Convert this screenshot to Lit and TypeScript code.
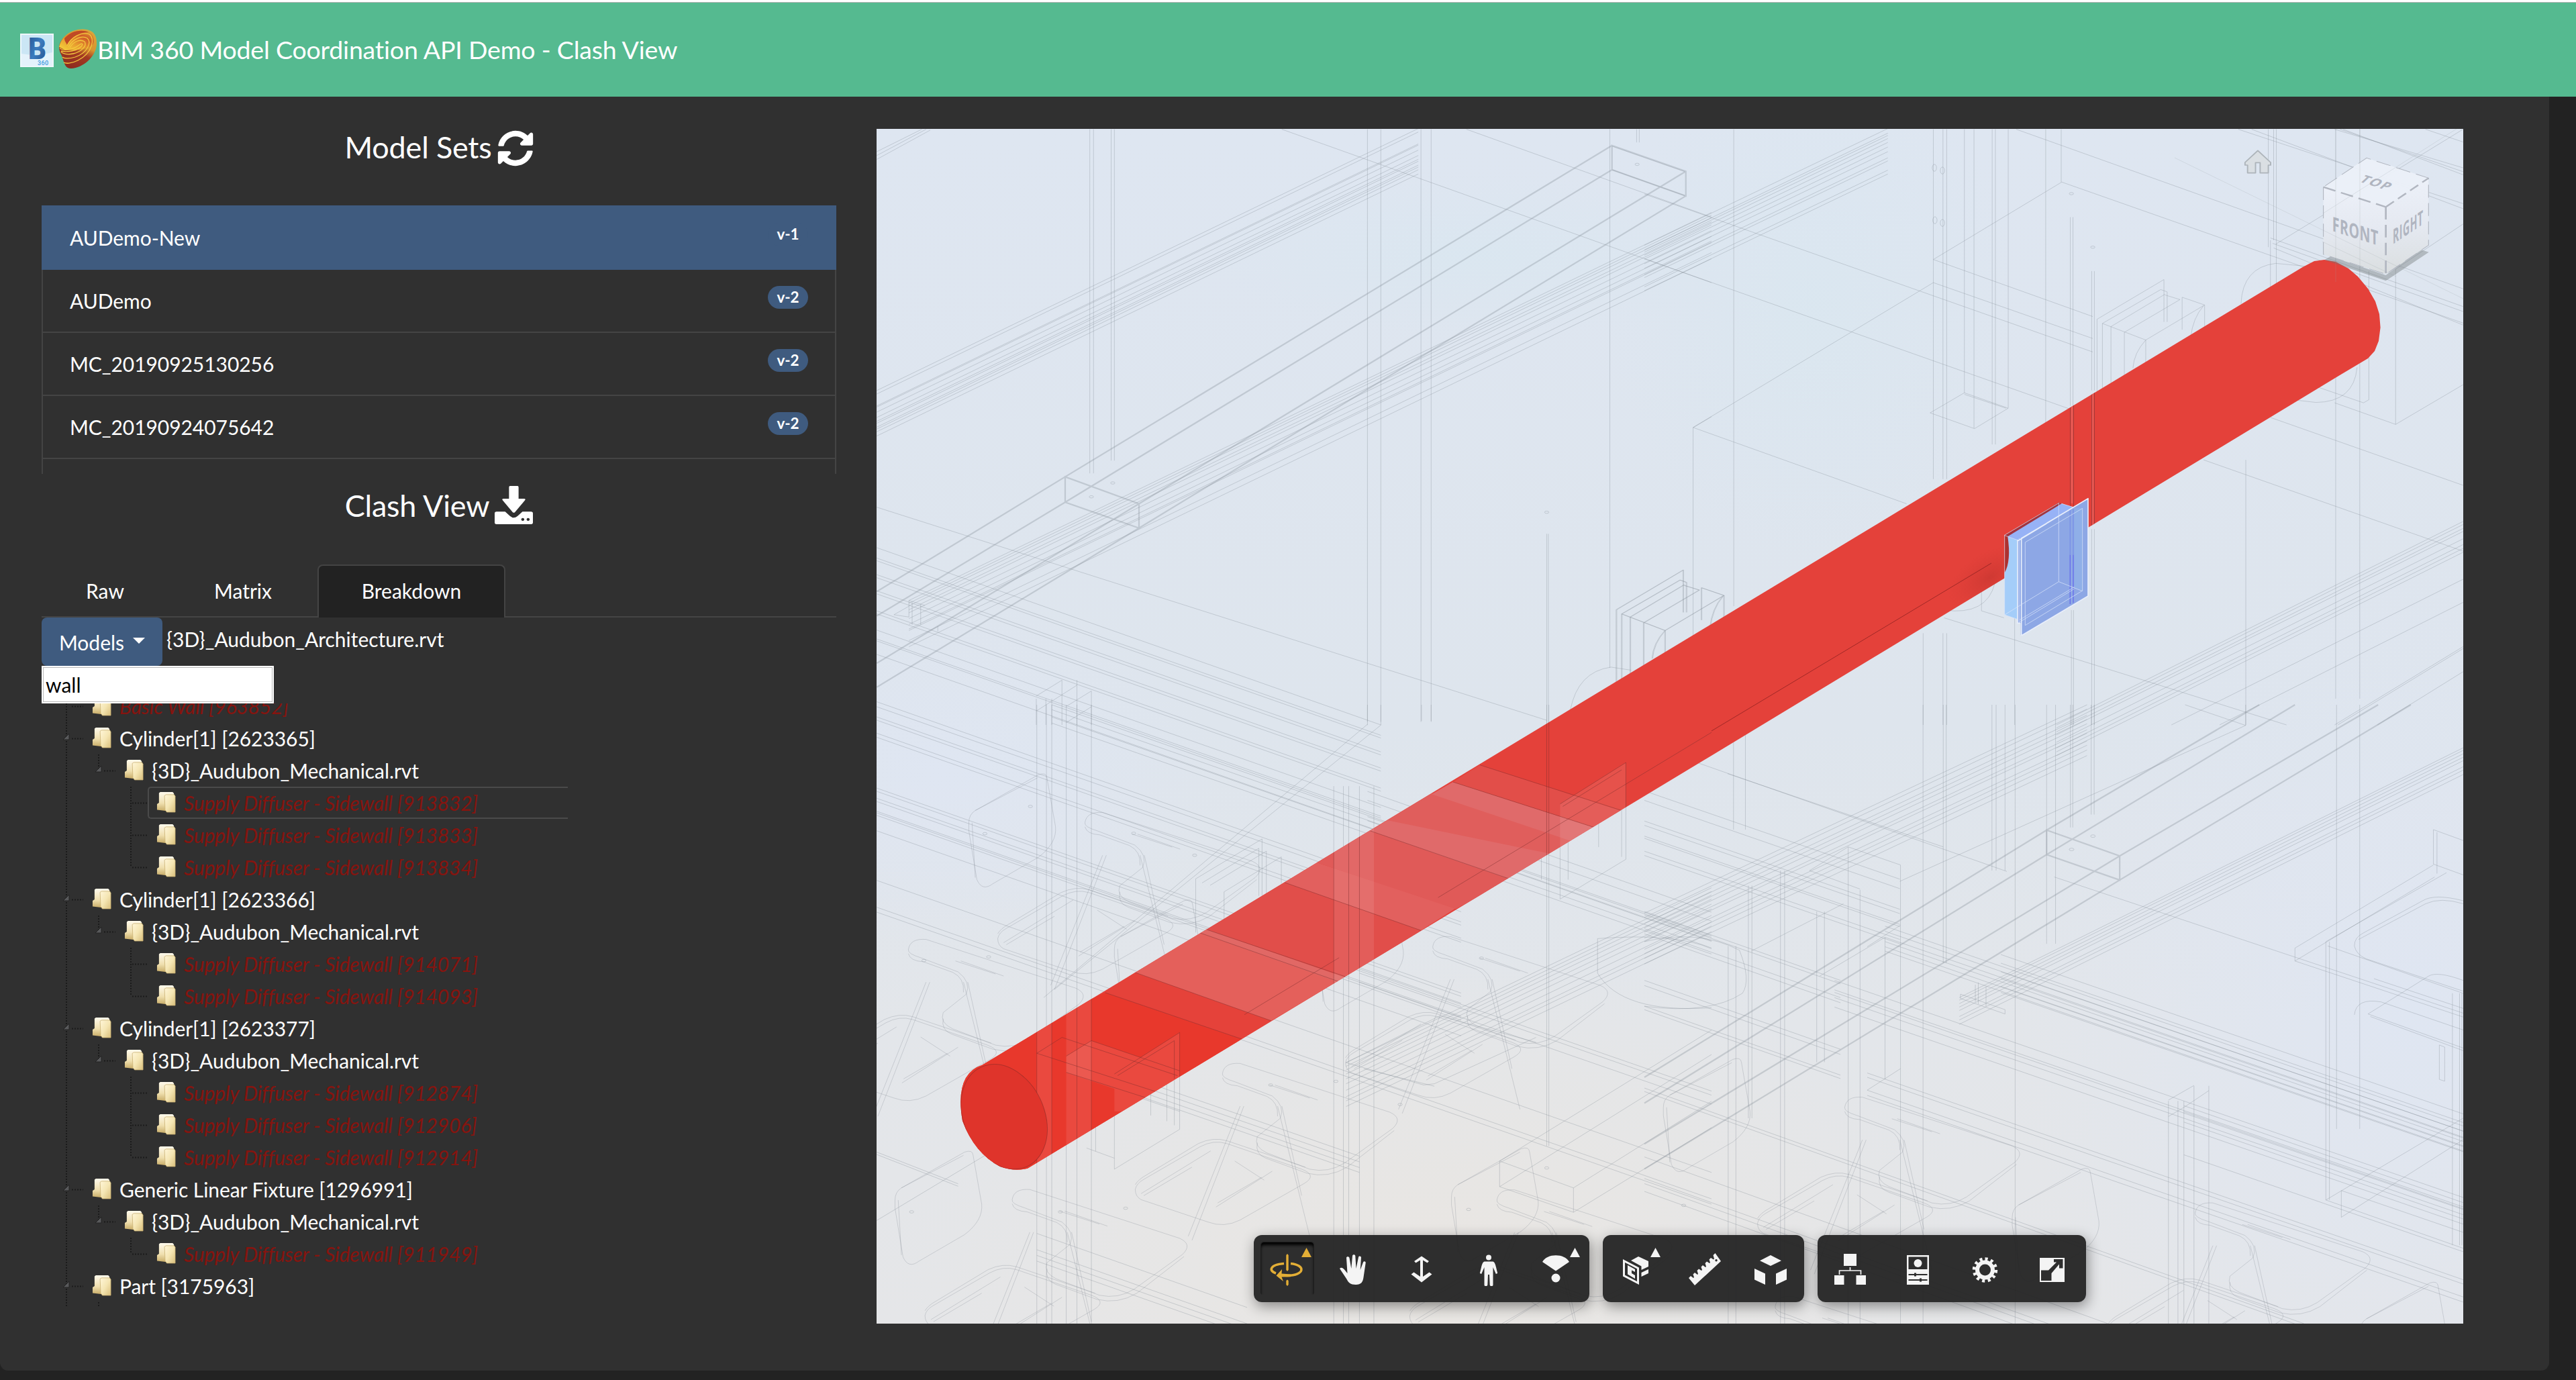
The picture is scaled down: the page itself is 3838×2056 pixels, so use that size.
import { LitElement, html, css, svg } from "lit";
import { customElement, property } from "lit/decorators.js";
import { classMap } from "lit/directives/class-map.js";

type Seg = [number, number, number, number];

/** Path data for single segments. */
const segs = (list: Seg[]) => list.map(([a, b, c, d]) => `M${a},${b}L${c},${d}`).join("");

/** Path data for one segment repeated at vertical offsets. */
const bundle = ([a, b, c, d]: Seg, dys: number[]) =>
  dys.map((o) => `M${a},${b + o}L${c},${d + o}`).join("");

/** Path data for vertical lines. */
const verts = (xs: number[], y1: number, y2: number) =>
  xs.map((x) => `M${x},${y1}V${y2}`).join("");

/** Wall diffuser outline with its top-right corner at x, y. */
const diffuser = (x: number, y: number) =>
  `M${x},${y}L${x - 125},${y + 103}V${y + 330}M${x},${y}V${y + 110}` +
  `M${x - 6},${y + 26}L${x - 115},${y + 114}V${y + 330}M${x - 6},${y + 26}L${x + 6},${y + 32}V${y + 110}` +
  `M${x + 2},${y + 38}L${x - 99},${y + 122}V${y + 330}M${x + 2},${y + 40}L${x + 30},${y + 52}L${x - 74},${y + 137}V${y + 280}` +
  `M${x + 34},${y + 46}L${x + 76},${y + 66}L${x - 34},${y + 157}L${x - 115},${y + 114}M${x + 34},${y + 46}V${y + 130}` +
  `M${x + 76},${y + 66}V${y + 130}M${x - 34},${y + 157}V${y + 220}M${x - 34},${y + 157}Q${x - 56},${y + 190} ${x - 58},${y + 230}` +
  `M${x + 74},${y + 68}Q${x + 54},${y + 100} ${x + 50},${y + 150}`;

const CHAIR =
  "M234,575Q236,560 250,550L355,470Q380,452 405,462L545,525Q575,540 550,560L430,650Q400,670 370,655L245,600Q234,592 234,575Z" +
  "M234,563Q240,550 254,540L352,462Q380,445 405,455L552,520" +
  "M397,290Q400,262 430,265L710,385Q735,400 715,425L625,510Q595,535 560,525L480,485Q455,470 462,445L505,400Q515,370 490,345L420,310Q395,300 397,290Z" +
  "M397,300Q400,318 425,320L480,346Q502,360 500,395M718,430L630,520Q595,548 555,535L478,498Q458,488 462,460" +
  "M437,370L340,700M430,370L333,690M500,370L560,690M508,370L545,590M245,585L375,480M250,590L340,520M385,618L490,530M388,608L470,545M420,505L475,552M485,318L560,350M495,318L575,355";

const CHAIR_BACK =
  "M180,290Q180,270 192,260L310,172Q325,165 326,180L342,300Q345,340 310,375L225,440Q205,460 195,430L180,310ZM192,260L308,180M186,290L192,425";

const Q7 = [
  bundle([8, 700, 1020, 20], [0, 9, 40, 43, 56, 70, 80, 85, 95, 100, 107, 118]),
  bundle([68, 1245, 1568, 238], [0, 7, 14, 24, 32, 47, 62, 74, 78, 104, 120]),
  segs([[8, 80, 92, 22], [8, 90, 100, 22], [8, 100, 108, 24],
    [765, 22, 1568, 420], [1110, 22, 1568, 250], [8, 1003, 1260, 1556],
    [1382, 66, 1518, 132], [1382, 127, 1518, 194], [1534, 796, 1568, 768]]),
  verts([925, 950], 22, 1560), verts([1025, 1044], 22, 1560),
  verts([406, 413], 22, 915), verts([446, 452], 22, 882), verts([1378], 22, 1420), verts([1260, 1263], 1072, 1568),
  verts([1428, 1433], 22, 56),
  verts([354, 382], 1452, 1568), verts([409], 1480, 1568), verts([306, 324, 335], 1500, 1568),
  bundle([8, 1108, 950, 1568], [0, 27, 34, 70, 78, 112, 120, 164, 172, 214, 237, 242, 277, 400]),
  "M306,1493L354,1452M306,1532L382,1465M362,1520L409,1480M362,1562L409,1521",
  "M68,1245V1288L40,1282L68,1260M68,1245L98,1258M90,1255V1308M74,1250V1308M122,1325V1312",
  diffuser(1516, 1166),
  "M1304,1530Q1318,1430 1380,1418L1418,1426M445,940a4,3 0 1 0 8,0a4,3 0 1 0 -8,0M405,976a4,3 0 1 0 8,0a4,3 0 1 0 -8,0M1256,1016a4,3 0 1 0 8,0a4,3 0 1 0 -8,0M1425,113a4,3 0 1 0 8,0a4,3 0 1 0 -8,0",
].join("");

const Q7_STRONG =
  segs([[360, 924, 1382, 64], [360, 990, 1382, 127], [498, 994, 1520, 131], [498, 1057, 1520, 195],
    [360, 924, 8, 1222], [360, 990, 8, 1285], [498, 994, 8, 1408], [498, 1057, 8, 1470]]) +
  "M360,924V990L498,1057V994ZM1382,64V127L1520,195V131Z";

const Q8 = [
  bundle([0, 323, 455, 20], [0, 12, 18, 26, 36, 48, 60, 76, 84, 108, 118]),
  verts([167], 22, 1260), verts([540, 558, 565], 22, 930), verts([616], 22, 798), verts([598], 22, 706),
  verts([650, 656], 22, 840), verts([680], 22, 745), verts([750], 22, 790), verts([779], 22, 159),
  verts([1176, 1181], 22, 310), verts([1166], 22, 328), verts([1170, 1181], 310, 440),
  verts([1292, 1337], 22, 1500), verts([1404], 385, 788), verts([1124], 880, 1568),
  verts([796, 801], 250, 740), verts([836, 841], 390, 700), verts([836, 841], 1060, 1568), verts([798, 802], 1270, 1568),
  verts([521, 558, 565], 1330, 1568), verts([692], 1290, 1568), verts([91], 796, 1340),
  segs([[695, 22, 1530, 436], [780, 159, 1530, 525], [780, 159, 540, 360], [540, 360, 838, 508], [0, 190, 838, 600],
    [540, 420, 91, 796], [540, 420, 838, 565], [0, 358, 795, 748], [91, 796, 490, 994], [1045, 880, 1530, 1117],
    [1170, 770, 1530, 946], [1530, 685, 1404, 788], [1404, 788, 1290, 732], [1170, 304, 1530, 482], [1174, 318, 1530, 495],
    [1176, 330, 1530, 530], [1110, 22, 1530, 215], [1135, 22, 1530, 228], [1290, 22, 1530, 122], [1300, 22, 1530, 132],
    [1306, 22, 1530, 140], [1460, 22, 1530, 55], [1530, 22, 1180, 320], [1530, 268, 1404, 385], [560, 1290, 1200, 1568]]),
  bundle([770, 1568, 1530, 1040], [0, 8, 18, 26, 45, 60, 70, 80]),
  segs([[985, 1568, 1530, 1190], [1075, 1568, 1530, 1250], [1290, 1568, 1530, 1365], [1370, 1568, 1530, 1430], [1296, 1568, 1530, 1370]]),
  "M598,706L680,746L617,799L534,758ZM598,710L676,746",
  "M538,122a4,9 0 1 0 8,0a4,9 0 1 0 -8,0M553,129a4,9 0 1 0 8,0a4,9 0 1 0 -8,0M539,258a4,9 0 1 0 8,0a4,9 0 1 0 -8,0M553,265a4,9 0 1 0 8,0a4,9 0 1 0 -8,0",
  "M794,189a4,3 0 1 0 8,0a4,3 0 1 0 -8,0M834,328a4,3 0 1 0 8,0a4,3 0 1 0 -8,0",
  diffuser(971, 412), diffuser(72, 1166),
  "M1115,475Q1118,380 1180,370L1240,378M1332,640Q1326,730 1255,731L1200,722M1354,390V724L1344,732L1210,668M560,1270Q640,1285 655,1200M630,1215V1272L672,1290",
].join("");

const Q9 = [
  verts([307, 325, 335, 362, 382, 409], 0, 1522), verts([862, 880, 890, 910, 937], 200, 1522), verts([1260, 1264], 0, 1085),
  verts([925, 950], 0, 50), verts([1026, 1044], 0, 40),
  bundle([8, 30, 1100, 534], [-25, 0, 8, 40, 50, 175, 183, 200, 208, 232, 236, 242, 280]),
  segs([[8, 432, 1568, 1150], [8, 498, 1568, 1215], [8, 510, 1568, 1228], [8, 1100, 160, 1178], [8, 1106, 160, 1184],
    [8, 1268, 600, 800], [340, 700, 950, 50], [320, 720, 925, 48]]),
  bundle([335, 0, 1568, 568], [0, 12, 30, 45]),
  bundle([925, 225, 1568, 522], [-12, 10, 50, 60]),
  bundle([910, 650, 1568, 950], [0, 10, 32]),
  bundle([362, 860, 910, 1110], [0, 14, 28, 40]),
  bundle([307, 1340, 700, 1522], [0, -40, 14, 28]),
  bundle([885, 880, 1568, 450], [0, 9, 18, 28, 40, 52, 68, 84, 94, 108]),
  "M885,880L1030,935L1050,932L1240,818M918,895L1050,938M885,880L1060,765L1240,830",
  "M1172,1122L1310,1188V1248L1172,1185ZM1172,1122L1568,800M1172,1185L1568,860M1310,1188L1568,975M1310,1248L1568,1040",
  "M604,428L728,330V470M604,428V560M616,438L722,353V470M631,444L736,360V470M657,460L764,374V440M657,460V530",
  "M1285,244L1408,142V380L1285,478ZM1290,250L1400,160V374M1250,430V270M1300,430V330M1357,350V290",
  "M452,908L574,806V1044L452,1142ZM458,912L564,826V1034M417,1098V1000M550,1024V930M520,1010V950",
  "M400,1090L452,1115M307,857L354,818L570,912M307,857L362,884M362,864L409,826L574,900M362,904L574,1000",
  "M1355,575Q1500,560 1568,600M1355,575V660Q1400,760 1568,745",
].join("");

const Q10 = [
  bundle([0, 484, 745, 0], [0, 10, 24, 34, 44, 58, 66, 84, 94, 105, 118]),
  bundle([530, 680, 1378, 100], [0, 6, 14, 22, 30, 44, 52, 62]),
  bundle([0, 200, 430, 405], [0, 22, 70, 80, 105, 110, 140, 150]),
  bundle([0, 480, 330, 640], [0, 8, 40, 52, 160, 172, 220, 228]),
  bundle([405, 540, 1378, 1004], [-26, -14, 0, 10, 22, 32]),
  bundle([320, 680, 1378, 1184], [-40, -18, -12, 0, 22]),
  bundle([600, 620, 1378, 990], [-40, -20, 0, 16, 34, 48]),
  bundle([375, 895, 1378, 1375], [0, 12, -30, -40]),
  bundle([0, 890, 1110, 1437], [0, 8]),
  bundle([0, 1050, 780, 1437], [0, 50, 62, 80]),
  bundle([908, 945, 1378, 1170], [0, 24, -14, 100]),
  verts([150, 170], 0, 290), verts([229, 236], 385, 1437), verts([343, 363], 430, 1437), verts([343], 330, 430), verts([431], 372, 1437),
  verts([405], 540, 870), verts([181, 175], 420, 960), verts([141, 154], 560, 1437), verts([290, 303], 480, 830), verts([469], 0, 1437),
  verts([503, 508], 0, 600), verts([585, 592], 0, 385), verts([607], 0, 385), verts([624], 0, 1437),
  verts([677, 692], 0, 555), verts([717, 721], 0, 285), verts([752, 757], 0, 255),
  verts([882, 898, 908], 920, 1437), verts([925, 950], 885, 1437), verts([1147, 1153], 550, 1150), verts([1165, 1204], 0, 985),
  verts([1360, 1372, 1376], 670, 1255),
  segs([[80, 130, 610, 387], [140, 160, 503, 330], [690, 400, 1378, 716], [910, 0, 1012, 48], [1012, 48, 430, 410], [1012, 0, 1012, 48],
    [1095, 565, 1328, 372], [1095, 565, 1095, 595], [1095, 595, 1378, 725], [1095, 595, 1330, 400], [343, 330, 431, 372],
    [278, 385, 343, 330], [278, 385, 363, 428], [180, 572, 335, 462], [295, 630, 405, 540], [375, 562, 431, 512],
    [375, 895, 431, 845], [882, 918, 925, 884], [908, 935, 950, 896], [882, 956, 908, 935], [1147, 1150, 1378, 1262],
    [1147, 1150, 1378, 960], [1173, 1128, 1378, 1225], [1173, 1190, 1378, 1010], [1173, 1128, 1173, 1190], [1147, 550, 1350, 390]]),
  "M1328,290L1378,315M1328,290V370L1378,395M1334,296V392M1195,560Q1195,540 1210,530L1310,455Q1330,438 1378,455M1195,560Q1198,580 1215,590L1378,665M1202,545L1315,462Q1340,446 1378,462",
  "M1218,718L1320,630Q1335,618 1378,640M1218,718L1378,797M1222,724L1378,803M1228,636L1378,705M1150,560L1378,670M1195,720Q1198,680 1240,690L1378,755M1338,790V870L1347,874V795Z",
  "M0,550Q90,520 160,570Q180,640 165,670Q110,720 0,700",
  "M751,305a4,3 0 1 0 8,0a4,3 0 1 0 -8,0M715,336a4,3 0 1 0 8,0a4,3 0 1 0 -8,0M557,650V690M562,645V695M575,655V700M532,672V682L607,718V708Z",
].join("");

const Q10_STRONG =
  segs([[677, 291, 1035, 0], [677, 348, 1095, 0], [800, 351, 1235, 0], [800, 407, 1290, 0],
    [677, 291, 0, 865], [677, 348, 0, 925], [800, 351, 0, 1020], [800, 407, 0, 1078]]) +
  "M677,291L800,351V407L677,348Z";

const CHAIRS: [number, number][] = [[0, 0], [-330, 312], [257, 617], [-136, 927], [650, 305], [770, 928], [1420, 700], [2075, 960], [1290, 1190]];
const BACKS: [number, number][] = [[0, 0], [-138, 928], [272, 310], [902, 920], [1298, 700], [650, 305], [1950, 970], [2600, 1250]];
const DOTS: [number, number][] = [[295, 250], [210, 317], [488, 316], [96, 629], [744, 935], [351, 1247], [1138, 623], [217, 620], [866, 926], [473, 1238], [1260, 1139], [986, 983], [73, 1247], [1516, 1231], [602, 370], [1114, 1241]];

@customElement("model-scene")
class ModelScene extends LitElement {
  static styles = css`
    :host { display: block; width: 2364px; height: 1780px; }
    svg { display: block; width: 2364px; height: 1780px; }
    .wire path, .wire ellipse { fill: none; stroke: #848c94; stroke-opacity: 0.33; stroke-width: 1; vector-effect: non-scaling-stroke; }
    .wire .strong { stroke-width: 2.2; stroke-opacity: 0.32; }
    .wire .faint { stroke-opacity: 0.3; }
    .cube text { font-family: "Open Sans", sans-serif; font-weight: 700; fill: #b0b5c0; text-anchor: middle; }
  `;
  render() {
    const chairs = CHAIRS.map(([x, y]) => svg`<path class="faint" transform="translate(${x} ${y})" d=${CHAIR} />`);
    const backs = BACKS.map(([x, y]) => svg`<path class="faint" transform="translate(${x} ${y})" d=${CHAIR_BACK} />`);
    const dots = DOTS.map(([x, y]) => svg`<ellipse cx=${x} cy=${y} rx="4" ry="3" />`);
    return html`
      <svg viewBox="1306 192 2364 1780">
        <defs>
          <linearGradient id="sky" x1="0" y1="0" x2="0" y2="1">
            <stop offset="0" stop-color="#dee6f1" />
            <stop offset="0.5" stop-color="#dee5ed" />
            <stop offset="0.75" stop-color="#e3e6ea" />
            <stop offset="1" stop-color="#e5e6e8" />
          </linearGradient>
          <radialGradient id="warm"><stop offset="0" stop-color="#e9e6e2" /><stop offset="1" stop-color="#e9e6e2" stop-opacity="0" /></radialGradient>
          <radialGradient id="cool"><stop offset="0" stop-color="#dfe6f2" /><stop offset="1" stop-color="#dfe6f2" stop-opacity="0" /></radialGradient>
          <radialGradient id="aqua"><stop offset="0" stop-color="#d8e7f0" stop-opacity="0.6" /><stop offset="1" stop-color="#d8e7f0" stop-opacity="0" /></radialGradient>
          <radialGradient id="shade"><stop offset="0" stop-color="#b02d28" stop-opacity="0.4" /><stop offset="1" stop-color="#c8352f" stop-opacity="0" /></radialGradient>
          <linearGradient id="front" x1="0" y1="0" x2="0" y2="1"><stop offset="0" stop-color="#edf1f9" /><stop offset="0.5" stop-color="#e5e9f1" /><stop offset="1" stop-color="#dadedf" /></linearGradient>
          <clipPath id="pipe">
            <path d="M1463.4,1586.8L2350.7,1050L3430.7,398L3448,389L3463,387L3480,390L3499,400L3513,412L3528,430L3539,449L3545,468L3546.6,488L3544,508L3538,523L3528,534L3486,559L2550,1125.7L1531,1740.7Q1512,1746 1490,1738Q1452,1718 1434,1670Q1422,1600 1463.4,1586.8Z" />
          </clipPath>
        </defs>
        <rect x="1306" y="192" width="2364" height="1780" fill="url(#sky)" />
        <ellipse cx="2150" cy="1900" rx="800" ry="480" fill="url(#warm)" />
        <ellipse cx="3600" cy="1500" rx="600" ry="700" fill="url(#cool)" />
        <ellipse cx="1400" cy="1150" rx="420" ry="260" fill="url(#cool)" />
        <ellipse cx="2200" cy="380" rx="400" ry="120" fill="url(#aqua)" />
        <ellipse cx="2700" cy="450" rx="300" ry="380" fill="url(#aqua)" />
        <g class="wire" transform="translate(1300 180) scale(.79719 .57398)">
          <path d=${Q7} /><path class="strong" d=${Q7_STRONG} />
        </g>
        <g class="wire" transform="translate(2450 180) scale(.79719 .57398)"><path d=${Q8} /></g>
        <g class="wire" transform="translate(1300 1050) scale(.79719 .60587)">
          <path d=${Q9} />${chairs}${backs}${dots}
        </g>
        <g class="wire" transform="translate(2450 1050) scale(.88520 .64160)">
          <path d=${Q10} /><path class="strong" d=${Q10_STRONG} />
        </g>

        <g clip-path="url(#pipe)">
          <rect x="1400" y="380" width="2200" height="1400" fill="#e4413a" />
          <g transform="translate(1300 1050) scale(.79719 .60587)">
            <path fill="#e8382c" d="M100,900L435,708L690,822L300,1200H100Z" />
            <path fill="#e5423a" d="M435,708L490,658L745,777L690,822Z" />
            <path fill="#e4605b" d="M490,658L610,558L870,680L745,777Z" />
            <path fill="#e16865" d="M610,560L625,550L887,670L870,682Z" />
            <path fill="#e14e4a" d="M625,553L770,437L1025,555L887,672Z" />
            <path fill="#e2605e" d="M770,437L830,388L1090,500L1025,555Z" />
            <path fill="#e05a58" d="M830,388L930,308L1192,430L1090,502Z" />
            <path fill="#e06a6a" d="M930,310L965,282L1266,364L1192,430Z" />
            <path fill="#e05e5c" d="M962,284L1045,218L1310,335L1266,366Z" />
            <path fill="#e06a6a" d="M1045,220L1085,190L1350,302L1310,337Z" />
            <path fill="#e24e49" d="M1085,190L1135,148L1402,262L1350,302Z" />
            <path fill="#fff" fill-opacity="0.09" d="M307,700H335V1200H307ZM362,600H409V1200H362ZM862,300H937V700H862Z" />
            <path fill="#fff" fill-opacity="0.09" d="M362,864L409,826L574,900L505,968L362,904ZM1285,244L1408,142V300L1285,400ZM452,908L574,806V1000H452Z" />
            <path fill="none" stroke="#7a2e2e" stroke-opacity="0.45" vector-effect="non-scaling-stroke" d="M307,700V1200M335,600V1200M382,600V1200M409,600V1200M862,300V700M890,300V700M910,300V700M1260,0V400M1264,0V400M435,708L690,822M490,658L745,777M610,560L870,680M625,553L887,670M770,437L1025,555M930,310L1190,428M1085,190L1350,302M1135,148L1400,260M695,762L872,622M1057,474L1568,68M452,908L574,806V920M458,912L564,826V920M1285,244L1408,142V300M1290,250L1400,160M307,857L354,818L570,912M362,864L409,826L574,900M362,904L520,970M307,857L550,960" />
            <ellipse cx="246" cy="1013" rx="77" ry="131" transform="rotate(-13 246 1013)" fill="#df342b" stroke="#8c2b28" stroke-opacity="0.6" stroke-width="1" vector-effect="non-scaling-stroke" />
          </g>
          <ellipse cx="2965" cy="860" rx="70" ry="38" transform="rotate(-31 2965 860)" fill="url(#shade)" />
          <path fill="none" stroke="#86201f" stroke-opacity="0.7" d="M2967,839L2550,1089" />
          <path fill="none" stroke="#e8716c" stroke-opacity="0.55" stroke-width="3" d="M3087,560V750M3118,540V790" />
          <path fill="none" stroke="#7c2f33" stroke-opacity="0.6" d="M3084.500,580V760M3089.500,580V760M3116.500,560V800M3120.500,560V800" />
        </g>

        <g transform="translate(2900 680) scale(.33333)" stroke-linejoin="round">
          <path fill="#8c3040" fill-opacity="0.75" d="M258,353L505,205L515,215L275,360Z" />
          <path fill="#9f2e30" fill-opacity="0.8" d="M260,355H275L281,430L272,490L260,520Z" />
          <path fill="#a4cdf9" d="M274,358L318,372V728L260,708V520Q290,470 274,358Z" />
          <path fill="#97b2f6" d="M274,358L515,211L570,228L335,370L318,374Z" />
          <path fill="#8da7e5" d="M318,374L335,366L633,188V624L340,798H332V745H318Z" />
          <path fill="#8fafe8" d="M571,232L608,230V600L571,585Z" />
          <path fill="none" stroke="#6f86e8" stroke-width="4" stroke-opacity="0.7" d="M553,240V440M567,235V440" />
          <path fill="none" stroke="#5b5fec" stroke-width="4" stroke-opacity="0.8" d="M553,440V660M567,440V655" />
          <path fill="none" stroke="#e8eefb" stroke-width="5" d="M335,366L633,188V624L340,798H335ZM318,372V745H330M318,378L553,236" />
          <path fill="none" stroke="#dbe6fb" stroke-width="3" stroke-opacity="0.7" d="M352,384L608,232V600L352,755ZM502,210V560L260,708M502,560L608,602M571,584L328,730M571,592L328,740M325,366V745M515,211L570,228M260,353L318,374M260,353V708L318,728M258,353L505,207" />
        </g>

        <g transform="translate(3240 180) scale(.38138 .33333)">
          <path d="M325,133L375,186V198H366V233H334V187H316V233H285V198H275V186Z" fill="#dadfe3" stroke="#adb4ba" stroke-width="5" stroke-linejoin="round" />
          <path d="M585,622L825,715L993,587L960,575L825,690L610,605Z" fill="#6e7676" fill-opacity="0.4" />
        </g>
        <g class="cube">
          <g transform="translate(3240 180) scale(.38138 .33333)">
            <path fill="#ebf0f8" fill-opacity="0.96" d="M750,166L992,256L825,385L581,296Z" />
            <path fill="url(#front)" fill-opacity="0.97" d="M581,296L825,385V685L581,597Z" />
            <path fill="url(#front)" fill-opacity="0.97" d="M825,385L992,256V556L825,685Z" />
            <path fill="none" stroke="#b2b7c1" stroke-width="7" stroke-dasharray="50 23" d="M581,296L825,385" />
            <path fill="none" stroke="#b2b7c1" stroke-width="7" stroke-dasharray="40 20" d="M825,385L992,256" />
            <path fill="none" stroke="#b2b7c1" stroke-width="7" stroke-dasharray="56 24" d="M825,385V685" />
            <path fill="none" stroke="#b2b7c1" stroke-width="3" stroke-dasharray="58 24" d="M581,296V597L825,685L992,556V256L750,166L581,296" />
          </g>
          <text font-size="28" textLength="98" transform="matrix(.70 .223 0 1.07 3509 355)">FRONT</text>
          <text font-size="28" textLength="90" transform="matrix(.50 -.335 0 1.07 3587.500 349)">RIGHT</text>
          <text font-size="26" textLength="56" transform="matrix(.75 .24 -.56 .52 3535 277)">TOP</text>
        </g>
        <path fill="none" stroke="#9aa2aa" stroke-opacity="0.22" d="M3480,192V420M3516,192V400M3461,318L3660,192M3240,235L3670,445M3460,360L3570,412" />
      </svg>`;
  }
}

const TRI = svg`<path d="M71,33L78.500,19L86,33Z" />`;
const ICONS: Record<string, unknown> = {
  orbit: svg`${TRI}<path d="M48.300,30L50,28L51.700,30V52L50,54L48.300,52ZM48.300,68L50,66.500L51.700,68V74L50,76L48.300,74Z"/><path fill="none" stroke="currentColor" stroke-width="3.600" d="M45,42.500C22,44.500 23,54 33,57M55,42.500C78,45 76,60 50,60.500L38,59.800"/><path d="M33.500,60.500L42,51L41.500,57.500L55,58.500V62.300L41.500,62.500L44,69Z"/>`,
  pan: svg`<path d="M28,50C30,47.500 33,49 35,51.500L39.500,57L38,34C38,31.500 42,31.500 42.500,34L45.300,50L47,31C47.200,28.500 51,28.500 51.300,31L52.500,50L56,33C56.700,30.700 60,31.300 60,33.600L58.700,52L63,40.500C64,38.500 67,39.300 66.700,41.500L63.500,63C62.500,70 60,74 52,74C44,74 41,71 38,65Z"/>`,
  zoom: svg`<path d="M50,31.500L61,39L58.500,41.500L52,37.500V62L61.500,55.500L65.500,58.500L50,70.500L34.500,58.500L38.500,55.500L48,62V37.500L41.500,41.500L39,39Z"/>`,
  walk: svg`<circle cx="50" cy="33.500" r="4"/><path d="M44,39.500H56C59,40 60,44 61,48L63.200,57L60.800,58L56.500,48V74.500C56.500,76.500 52,76.500 51.700,74.500L51,59H49L48.300,74.500C48,76.500 43.500,76.500 43.500,74.500V48L39.200,58L36.800,57L39,48C40,44 41,40 44,39.500Z"/>`,
  camera: svg`${TRI}<path d="M30,40C37,27 63,27 70,40L50,53.500Z"/><circle cx="50" cy="64" r="6.500"/>`,
  section: svg`${TRI}<path fill="none" stroke="currentColor" stroke-width="3" d="M31.500,38.500L52.500,49.500V71.500L31.500,60.500Z"/><path d="M37,45L48,51V55L43,52.500V57L48,60V65L37,58.500ZM53,32L68,39V47L57.500,52V46.500L42,38ZM57.500,56L68,51V57L57.500,62Z"/>`,
  measure: svg`<path fill-rule="evenodd" d="M67.500,27L76,39L37,75L28,64L31,61L35,64L36,63L34.500,58.500L37,56L41,59L42,58L40.500,53L43,50.500L47,53L48,52L46.500,47.500L49,45L53,48L54,47L52.500,42L55,39.500L59,42L60,41L58.500,36.500L61,34L65,36.500L66,35.500L64.500,30ZM69,36a1.700,1.700 0 1 0 .1,0Z"/>`,
  explode: svg`<path d="M50,30L66,38.300L50,46L34,38.300ZM26,50L42,57.500V74L26,66.500ZM74,50L58,57.500V74L74,66.500Z"/>`,
  tree: svg`<path d="M39,28H58V46H39ZM25,60H39.500V74H25ZM57.500,60H72V74H57.500Z"/><path fill="none" stroke="currentColor" stroke-width="1.700" d="M48.500,48V53M32.500,59V53H64.500V59"/>`,
  props: svg`<path fill-rule="evenodd" d="M33,30H66V74H33ZM35.500,32.500V51H63.500V32.500ZM35.500,58V60H44V61.500H47V60H63.500V58H47V56.500H44V58ZM35.500,66V68H52V69.500H55V68H63.500V66H55V64.500H52V66Z"/><circle cx="49.500" cy="42" r="6"/>`,
  settings: svg`<circle cx="49.500" cy="52" r="11.500" fill="none" stroke="currentColor" stroke-width="6"/><path fill="none" stroke="currentColor" stroke-width="5.500" stroke-dasharray="4 4.377" d="M49.500,36a16,16 0 1 1 -.01,0"/>`,
  full: svg`<path fill-rule="evenodd" d="M31,34H68V70H31ZM33,52.500V68H48.500V57L60,43.500V49.500H65.500V36H52V40.500H56L44,52.500Z"/>`,
};

@customElement("viewer-toolbar")
class ViewerToolbar extends LitElement {
  static styles = css`
    :host { display: flex; gap: 20px; }
    .group { display: flex; height: 100px; border-radius: 12px; background: rgba(34, 34, 34, 0.94); box-shadow: 2px 6px 20px rgba(0, 0, 0, 0.42); }
    .btn { width: 100px; height: 100px; display: grid; place-items: center; color: #f4f4f4; box-sizing: border-box; }
    .btn svg { grid-area: 1 / 1; width: 100px; height: 100px; fill: currentColor; }
    .well { grid-area: 1 / 1; width: 80px; height: 80px; box-sizing: border-box; border-radius: 5px; box-shadow: inset 0 5px 4px -1px #000; border: 1px solid #1d1d1d; border-bottom-color: transparent; }
    .active { color: #e3ae36; }
  `;
  render() {
    const groups = [["orbit", "pan", "zoom", "walk", "camera"], ["section", "measure", "explode"], ["tree", "props", "settings", "full"]];
    return groups.map((g) => html`<div class="group">${g.map((n) => html`
      <div class=${classMap({ btn: true, active: n === "orbit" })}>
        ${n === "orbit" ? html`<div class="well"></div>` : null}
        <svg viewBox="0 0 100 100">${ICONS[n]}</svg>
      </div>`)}</div>`);
  }
}

@customElement("tree-row")
class TreeRow extends LitElement {
  @property({ type: Number }) level = 1;
  @property() label = "";
  @property({ type: Boolean }) last = false;
  @property({ type: Boolean }) hovered = false;
  static styles = css`
    :host { display: flex; height: 48px; flex: none; }
    .gutter { flex: none; height: 48px; display: block; }
    .item { flex: 1; display: flex; align-items: center; box-sizing: border-box; height: 48px; padding-left: 11px; border: 2px solid transparent; border-right: 0; border-radius: 5px 0 0 5px; font-size: 30px; color: #fff; white-space: pre; line-height: 44px; letter-spacing: -0.06px; }
    .hovered { border-color: #4a4a4a; }
    .folder { width: 29px; height: 34px; flex: none; margin: 0 12px 2px 0; }
    .clash { color: #86140f; font-style: italic; letter-spacing: -0.2px; }
  `;
  render() {
    const w = 14 + this.level * 48;
    const x = 37 + (this.level - 1) * 48;
    const leaf = this.level === 3;
    const clash = leaf || this.label.startsWith("Basic");
    let lines = "M37,0V48";
    if (this.level > 1) lines += `M${x},0V${this.last ? 24 : 48}`;
    lines += `M${x + (leaf ? 2 : 8)},24.500H${x + 26}`;
    return html`
      <svg class="gutter" width=${w} height="48" viewBox="0 0 ${w} 48">
        <path d=${lines} fill="none" stroke="#1b1b1b" stroke-width="2" stroke-dasharray="2 2" />
        ${clash ? null : svg`<path d="M${x - 5},26L${x + 4},17V26Z" fill="#58595b" stroke="#232323" stroke-width="1" />`}
      </svg>
      <div class=${classMap({ item: true, hovered: this.hovered })}>
        <svg class="folder" viewBox="0 0 30 34">
          <defs>
            <linearGradient id="a" x1="0" y1="0" x2="0" y2="1"><stop offset="0" stop-color="#fffaec" /><stop offset="0.6" stop-color="#efdfae" /><stop offset="1" stop-color="#c9ad68" /></linearGradient>
            <linearGradient id="b" x1="0" y1="0" x2="1" y2="1"><stop offset="0" stop-color="#fff6d8" /><stop offset="0.5" stop-color="#f5e6b4" /><stop offset="1" stop-color="#d9bf7c" /></linearGradient>
          </defs>
          <path d="M4,3L6,1.500H25L27,3.500V29L14,30.500L1,29V20L4,18Z" fill="url(#a)" />
          <path d="M12.500,7L15,5.500H27.500L29,8V32.500H16L13.500,29Z" fill="url(#b)" stroke="#c9b071" stroke-width=".8" />
        </svg>
        <span class=${classMap({ clash })}>${this.label}</span>
      </div>`;
  }
}

const MECH = "{3D}_Audubon_Mechanical.rvt";
const SD = (id: number) => `Supply Diffuser - Sidewall [${id}]`;
const ROWS: [number, string, boolean?][] = [
  [1, "Basic Wall [963852]"],
  [1, "Cylinder[1] [2623365]"], [2, MECH, true], [3, SD(913832)], [3, SD(913833)], [3, SD(913834), true],
  [1, "Cylinder[1] [2623366]"], [2, MECH, true], [3, SD(914071)], [3, SD(914093), true],
  [1, "Cylinder[1] [2623377]"], [2, MECH, true], [3, SD(912874)], [3, SD(912906)], [3, SD(912914), true],
  [1, "Generic Linear Fixture [1296991]"], [2, MECH, true], [3, SD(911949), true],
  [1, "Part [3175963]"], [2, "", true],
];
const SETS = [["AUDemo-New", "v-1"], ["AUDemo", "v-2"], ["MC_20190925130256", "v-2"], ["MC_20190924075642", "v-2"]];

@customElement("app-root")
class AppRoot extends LitElement {
  static styles = css`
    :host { display: block; width: 3838px; height: 2056px; overflow: hidden; background: #222; color: #fff; font-family: Lato, "Open Sans", sans-serif; font-size: 30px; line-height: 45px; }
    .topline { height: 3px; background: #fff; border-bottom: 1px solid #b3b3b3; }
    header { height: 140px; background: #55ba90; display: flex; align-items: center; padding-left: 30px; box-sizing: border-box; }
    .logo360 { width: 50px; height: 50px; margin: 2px 8px 0 0; display: block; overflow: visible; }
    .forge { width: 58px; height: 60px; margin: 0 -1px 2px 0; display: block; }
    .brand { font-size: 37.500px; line-height: 56px; white-space: pre; letter-spacing: -0.2px; }
    main { display: flex; gap: 60px; width: 3798px; height: 1898px; box-sizing: border-box; padding: 48px 0 0 62px; background: #303030; border-radius: 0 0 12px 12px; }
    .side { width: 1184px; display: flex; flex-direction: column; }
    h4 { margin: 0; font-weight: 400; font-size: 45px; line-height: 54px; display: flex; justify-content: center; align-items: center; gap: 8px; letter-spacing: -0.2px; box-sizing: border-box; }
    h4 svg { fill: #fff; display: block; }
    .h-sets { height: 114px; align-items: flex-start; }
    .h-sets svg { margin-top: 2px; }
    .h-clash { height: 135px; padding-top: 18px; align-items: flex-start; }
    .h-clash span { padding-top: 2px; }
    .list { height: 400px; overflow: hidden; box-sizing: border-box; }
    .set { box-sizing: border-box; height: 94px; border: 2px solid #444; border-top: 0; padding: 24px 40px 0; display: flex; justify-content: space-between; align-items: flex-start; letter-spacing: -0.06px; }
    .set.on { background: #3f5b7f; border-color: #3f5b7f; height: 96px; padding-top: 26px; }
    .set.rest { height: 60px; }
    .pill { width: 60px; height: 34px; line-height: 34px; border-radius: 20px; background: #3f5b7f; font-weight: 700; font-size: 22.500px; text-align: center; margin-top: 0; }
    .tabs { display: flex; height: 79px; box-sizing: border-box; border-bottom: 2px solid #444; }
    .tab { box-sizing: border-box; height: 79px; line-height: 45px; padding-top: 15px; text-align: center; border: 2px solid transparent; border-bottom: 0; border-radius: 8px 8px 0 0; }
    .raw { width: 189px; } .matrix { width: 222px; } .breakdown { width: 280px; background: #222; border-color: #444; }
    .picker { display: flex; height: 72px; gap: 6px; }
    .models { width: 180px; height: 72px; border-radius: 8px; background: #3f5b7f; display: flex; align-items: center; justify-content: center; gap: 13px; padding-top: 2px; box-sizing: border-box; }
    .caret { border: 9px solid transparent; border-top-color: #fff; border-bottom: 0; margin-top: -6px; }
    .model { padding-top: 10px; }
    .search { flex: none; width: 346px; height: 56px; box-sizing: border-box; background: #fff; border: 2px solid #fff; box-shadow: inset 0 0 0 1px #b8b8b8; color: #000; padding-left: 4px; line-height: 52px; }
    .tree { height: 900px; width: 784px; overflow: hidden; display: flex; flex-direction: column; }
    .rows { margin-top: -20px; display: flex; flex-direction: column; }
    .viewer { position: relative; width: 2364px; height: 1780px; overflow: hidden; }
    viewer-toolbar { position: absolute; left: 562px; top: 1648px; }
  `;
  render() {
    return html`
      <div class="topline"></div>
      <header>
        <svg class="logo360" viewBox="0 0 50 50">
          <defs><linearGradient id="lb" x1="0" y1="0" x2="1" y2="1"><stop offset="0" stop-color="#234f8f" /><stop offset="0.5" stop-color="#3b7cbf" /><stop offset="1" stop-color="#234b86" /></linearGradient></defs>
          <rect width="50" height="50" fill="#eef7fc" /><rect x="2" y="2" width="46" height="46" fill="#cbe6f5" />
          <path d="M2,30L25,33L48,28V48H2Z" fill="#e4f2fb" />
          <text x="12" y="37.500" font-family="Roboto, sans-serif" font-weight="900" font-size="45" textLength="27" lengthAdjust="spacingAndGlyphs" fill="url(#lb)">B</text>
          <text x="26" y="46.500" font-family="Roboto, sans-serif" font-weight="500" font-size="9" textLength="16" fill="#3d9be0">360</text>
        </svg>
        <svg class="forge" viewBox="0 0 58 60">
          <defs>
            <linearGradient id="fo" x1="0.7" y1="0" x2="0.3" y2="1"><stop offset="0" stop-color="#dba539" /><stop offset="0.4" stop-color="#d9932f" /><stop offset="0.6" stop-color="#a33a22" /><stop offset="1" stop-color="#8c2b1f" /></linearGradient>
            <linearGradient id="fi" x1="0" y1="1" x2="1" y2="0"><stop offset="0" stop-color="#f6d83c" /><stop offset="0.4" stop-color="#e79a2e" /><stop offset="0.7" stop-color="#cf5a28" /><stop offset="1" stop-color="#e0ac38" /></linearGradient>
          </defs>
          <path d="M0,27C2,12 18,0 36,0.500C50,1 57,8 56,24C54,42 36,58 18,59C9,59 8,52 4,40C1,35 0,31 0,27Z" fill="url(#fo)" />
          <path d="M0,27C3,12 20,1 38,3C50,5 53,12 51,22C46,30 22,33 8,31Z" fill="url(#fi)" />
          <path d="M8,14C18,3 34,0 44,5C30,5 18,12 12,24C10,20 8,18 8,14Z" fill="#c04a25" />
          <g fill="none" stroke="#f4c83e" stroke-width="1.300">
            <path d="M12,25C18,12 34,4 45,8C54,14 50,36 28,47C18,52 10,52 7,50" />
            <path d="M14,27C20,15 34,9 42,14C49,20 42,36 24,42C14,45 7,44 5,42" />
            <path d="M16,28C22,18 32,15 38,19C42,25 34,34 21,37C12,39 5,37 3,34" />
            <path d="M1,29C8,34 22,30 30,24C34,21 36,22 34,25C28,33 12,35 3,33" />
          </g>
        </svg>
        <div class="brand">BIM 360 Model Coordination API Demo - Clash View</div>
      </header>
      <main>
        <section class="side">
          <h4 class="h-sets"><span>Model Sets</span>
            <svg width="54" height="54" viewBox="0 0 512 512"><path d="M370.720 133.280C339.458 104.008 298.888 87.962 255.848 88c-77.458.068-144.328 53.178-162.791 126.850-1.344 5.363-6.122 9.150-11.651 9.150H24.103c-7.498 0-13.194-6.807-11.807-14.176C33.933 94.924 134.813 8 256 8c66.448 0 126.791 26.136 171.315 68.685L463.030 40.970C478.149 25.851 504 36.559 504 57.941V192c0 13.255-10.745 24-24 24H345.941c-21.382 0-32.090-25.851-16.971-40.971l41.750-41.749zM32 296h134.059c21.382 0 32.090 25.851 16.971 40.971l-41.750 41.750c31.262 29.273 71.835 45.319 114.876 45.280 77.418-.070 144.315-53.144 162.787-126.849 1.344-5.363 6.122-9.150 11.651-9.150h57.304c7.498 0 13.194 6.807 11.807 14.176C478.067 417.076 377.187 504 256 504c-66.448 0-126.791-26.136-171.315-68.685L48.970 471.030C33.851 486.149 8 475.441 8 454.059V320c0-13.255 10.745-24 24-24z" /></svg>
          </h4>
          <div class="list">
            ${SETS.map(([n, v], i) => html`<div class=${classMap({ set: true, on: i === 0 })}><span>${n}</span><span class="pill">${v}</span></div>`)}
            <div class="set rest"></div>
          </div>
          <h4 class="h-clash"><span>Clash View</span>
            <svg width="57" height="57" viewBox="0 0 512 512" fill-rule="evenodd"><path d="M205,0H307Q320,0 320,18V170H394Q420,172 404,194L272,350Q256,366 240,350L108,194Q92,172 118,170H192V18Q192,0 205,0Z" /><path d="M24,344H140L207,405Q256,446 305,405L372,344H488Q512,344 512,368V488Q512,512 488,512H24Q0,512 0,488V368Q0,344 24,344ZM376,428a20,20 0 1 0 .1,0ZM448,428a20,20 0 1 0 .1,0Z" /></svg>
          </h4>
          <div class="tabs"><div class="tab raw">Raw</div><div class="tab matrix">Matrix</div><div class="tab breakdown">Breakdown</div></div>
          <div class="picker"><div class="models">Models<span class="caret"></span></div><div class="model">{3D}_Audubon_Architecture.rvt</div></div>
          <div class="search">wall</div>
          <div class="tree"><div class="rows">
            ${ROWS.map(([l, t, last], i) => html`<tree-row .level=${l} .label=${t} .last=${!!last} .hovered=${i === 3}></tree-row>`)}
          </div></div>
        </section>
        <section class="viewer"><model-scene></model-scene><viewer-toolbar></viewer-toolbar></section>
      </main>`;
  }
}
